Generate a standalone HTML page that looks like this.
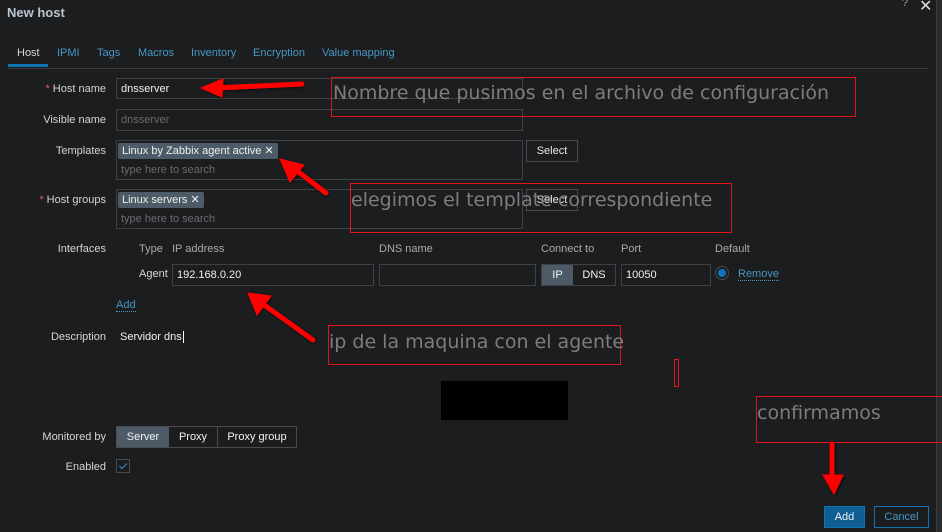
<!DOCTYPE html>
<html><head><meta charset="utf-8"><style>
*{box-sizing:border-box;margin:0;padding:0}
body{width:942px;height:532px;background:#1c1d1f;font-family:"Liberation Sans",sans-serif;font-size:11px;color:#f2f2f2;position:relative;overflow:hidden}
.a{position:absolute;white-space:nowrap}
.lbl{position:absolute;right:836px;color:#d5d5d5;text-align:right;white-space:nowrap}
.req{color:#e45959}
.in{position:absolute;border:1px solid #3f4043;background:#1c1d1f;padding:0 4px;line-height:21px;color:#f0f0f0}
.btn{position:absolute;border:1px solid #4a4b4e;color:#e8e8e8;text-align:center;line-height:20px;background:#1c1d1f}
.tag{position:absolute;background:#4c5b67;color:#f0f0f0;padding:0 4px;line-height:16px;border-radius:2px}
.ph{position:absolute;color:#6a6b6e}
.ann{position:absolute;border:1px solid #e0141a;color:#7c7d7f;font-family:"DejaVu Sans",sans-serif;font-size:19px;white-space:nowrap;line-height:31px;letter-spacing:0}
.link{color:#4796c4;border-bottom:1px dotted #4796c4}
.th{position:absolute;color:#a9aaab}
</style></head><body>
<div class="a" style="left:7px;top:5px;font-size:13px;font-weight:bold;color:#b9c6d0">New host</div>
<div class="a" style="left:902px;top:-3px;font-size:11px;color:#aaa">?</div>
<div class="a" style="left:919px;top:-4px;font-size:16px;color:#ddd">✕</div>
<div class="a" style="left:936px;top:0;width:6px;height:532px;background:#2a2b2d;border-left:1px solid #3a3b3d"></div>

<div class="a" style="left:17px;top:47px;color:#d5d5d5">Host</div>
<div class="a" style="left:8px;top:64px;width:40px;height:3px;background:#0f73b5"></div>
<div class="a" style="left:57px;top:47px;color:#4796c4">IPMI</div>
<div class="a" style="left:97px;top:47px;color:#4796c4">Tags</div>
<div class="a" style="left:138px;top:47px;color:#4796c4">Macros</div>
<div class="a" style="left:191px;top:47px;color:#4796c4">Inventory</div>
<div class="a" style="left:253px;top:47px;color:#4796c4">Encryption</div>
<div class="a" style="left:322px;top:47px;color:#4796c4">Value mapping</div>
<div class="a" style="left:8px;top:68px;width:921px;height:1px;background:#3a3b3d"></div>

<div class="lbl" style="top:83px"><span class="req">*</span> Host name</div>
<div class="in" style="left:116px;top:78px;width:407px;height:21px">dnsserver</div>
<div class="lbl" style="top:114px">Visible name</div>
<div class="in" style="left:116px;top:109px;width:407px;height:22px;color:#6a6b6e">dnsserver</div>
<div class="lbl" style="top:145px">Templates</div>
<div class="in" style="left:116px;top:140px;width:407px;height:40px"></div>
<div class="tag" style="left:118px;top:143px">Linux by Zabbix agent active ✕</div>
<div class="ph" style="left:121px;top:164px">type here to search</div>
<div class="btn" style="left:526px;top:140px;width:52px;height:22px">Select</div>
<div class="lbl" style="top:194px"><span class="req">*</span> Host groups</div>
<div class="in" style="left:116px;top:189px;width:407px;height:40px"></div>
<div class="tag" style="left:118px;top:192px">Linux servers ✕</div>
<div class="ph" style="left:121px;top:213px">type here to search</div>
<div class="btn" style="left:526px;top:189px;width:52px;height:22px">Select</div>

<div class="lbl" style="top:243px">Interfaces</div>
<div class="th" style="left:139px;top:243px">Type</div>
<div class="th" style="left:172px;top:243px">IP address</div>
<div class="th" style="left:379px;top:243px">DNS name</div>
<div class="th" style="left:541px;top:243px">Connect to</div>
<div class="th" style="left:621px;top:243px">Port</div>
<div class="th" style="left:715px;top:243px">Default</div>
<div class="a" style="left:139px;top:268px;color:#d5d5d5">Agent</div>
<div class="in" style="left:172px;top:264px;width:202px;height:22px">192.168.0.20</div>
<div class="in" style="left:379px;top:264px;width:157px;height:22px"></div>
<div class="a" style="left:541px;top:264px;width:75px;height:22px;border:1px solid #3f4043;display:flex">
 <div style="width:31px;background:#4c5b67;text-align:center;line-height:21px">IP</div>
 <div style="flex:1;text-align:center;line-height:21px">DNS</div></div>
<div class="in" style="left:621px;top:264px;width:90px;height:22px">10050</div>
<div class="a" style="left:715px;top:266px;width:14px;height:14px;border:1px solid #4a4b4e;border-radius:50%;background:#1c1d1f"><div style="margin:2px;width:8px;height:8px;border-radius:50%;background:#0f73b5"></div></div>
<div class="a link" style="left:738px;top:268px">Remove</div>
<div class="a link" style="left:116px;top:299px">Add</div>

<div class="lbl" style="top:331px">Description</div>
<div class="a" style="left:120px;top:331px">Servidor dns<span style="border-left:1px solid #fff;margin-left:1px"></span></div>

<div class="a" style="left:441px;top:381px;width:127px;height:39px;background:#000"></div>

<div class="lbl" style="top:431px">Monitored by</div>
<div class="a" style="left:116px;top:426px;width:181px;height:22px;border:1px solid #4a4b4e;display:flex;line-height:21px">
 <div style="width:52px;background:#4c5b67;text-align:center">Server</div>
 <div style="width:49px;text-align:center;border-right:1px solid #4a4b4e">Proxy</div>
 <div style="flex:1;text-align:center">Proxy group</div></div>
<div class="lbl" style="top:461px">Enabled</div>
<div class="a" style="left:116px;top:459px;width:14px;height:14px;border:1px solid #4a4b4e"><svg width="12" height="12" style="position:absolute;left:0;top:0"><path d="M2.5 6 L5 8.5 L10 3.5" fill="none" stroke="#2a8ad0" stroke-width="1.2"/></svg></div>

<div class="a" style="left:824px;top:506px;width:41px;height:22px;background:#0f5f94;border:1px solid #0f73b5;text-align:center;line-height:20px">Add</div>
<div class="a" style="left:874px;top:506px;width:55px;height:22px;border:1px solid #0f73b5;color:#4796c4;text-align:center;line-height:20px">Cancel</div>

<div class="ann" style="left:331px;top:77px;width:525px;height:40px;padding-left:1px">Nombre que pusimos en el archivo de configuración</div>
<div class="ann" style="left:350px;top:183px;width:382px;height:50px;line-height:32px">elegimos el template correspondiente</div>
<div class="ann" style="left:328px;top:325px;width:293px;height:40px;line-height:32px">ip de la maquina con el agente</div>
<div class="a" style="left:674px;top:359px;width:5px;height:28px;border:1px solid #e0141a"></div>
<div class="ann" style="left:756px;top:396px;width:190px;height:47px;line-height:33px">confirmamos</div>

<svg class="a" style="left:0;top:0" width="942" height="532">
<defs><filter id="s"><feDropShadow dx="1" dy="1" stdDeviation="1.5" flood-color="#000" flood-opacity=".6"/></filter></defs>
<g fill="#f00" stroke="#f00" stroke-linecap="round" stroke-width="5" filter="url(#s)">
<line x1="302" y1="84" x2="215" y2="88"/><polygon stroke-width="1" points="201,88 223,79 222,97"/>
<line x1="326" y1="193" x2="292" y2="167"/><polygon stroke-width="1" points="280,159 304,165 290,182"/>
<line x1="313" y1="340" x2="260" y2="302"/><polygon stroke-width="1" points="248,293 271,296 257,315"/>
<line x1="832" y1="444" x2="832" y2="480"/><polygon stroke-width="1" points="823,475 843,475 834,494"/>
</g></svg>
</body></html>
